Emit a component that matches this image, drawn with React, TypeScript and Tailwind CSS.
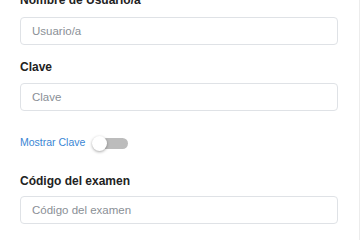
import React from "react";

export default function App() {
  const font = { fontFamily: '"Liberation Sans", Arial, sans-serif' };
  return (
    <div
      className="w-[360px] h-[240px] overflow-hidden bg-white border-r border-[#ececec]"
      style={font}
    >
      <div className="pl-5 pr-[21px]">
        <label className="block mt-[-9px] mb-2 text-[12px] leading-[18px] font-bold text-[#222]">
          Nombre de Usuario/a
        </label>
        <input
          className="block w-full h-[28px] px-[11px] text-[11.5px] border border-[#dfe2e6] rounded-[4px] placeholder:text-[#8a8f96] outline-none"
          placeholder="Usuario/a"
        />
        <label className="block mt-[13px] mb-[7px] text-[12px] leading-[18px] font-bold text-[#222]">
          Clave
        </label>
        <input
          className="block w-full h-[28px] px-[11px] text-[11.5px] border border-[#dfe2e6] rounded-[4px] placeholder:text-[#8a8f96] outline-none"
          placeholder="Clave"
          type="password"
        />
        <div className="flex items-center mt-[22px] h-[20px]">
          <span className="text-[10.5px] text-[#3a86d4]">Mostrar Clave</span>
          <div className="relative ml-[7px] w-[36px] h-[15px]">
            <div className="absolute left-[3px] top-[2px] w-[33px] h-[11px] rounded-full bg-[#bcbcbc]" />
            <div className="absolute left-0 top-0 w-[15px] h-[15px] rounded-full bg-white shadow-[0_1px_3px_rgba(0,0,0,0.35)]" />
          </div>
        </div>
        <label className="block mt-[19px] mb-[6px] text-[12px] leading-[18px] font-bold text-[#222]">
          Código del examen
        </label>
        <input
          className="block w-full h-[28px] px-[11px] text-[11.5px] border border-[#dfe2e6] rounded-[4px] placeholder:text-[#8a8f96] outline-none"
          placeholder="Código del examen"
        />
      </div>
    </div>
  );
}
